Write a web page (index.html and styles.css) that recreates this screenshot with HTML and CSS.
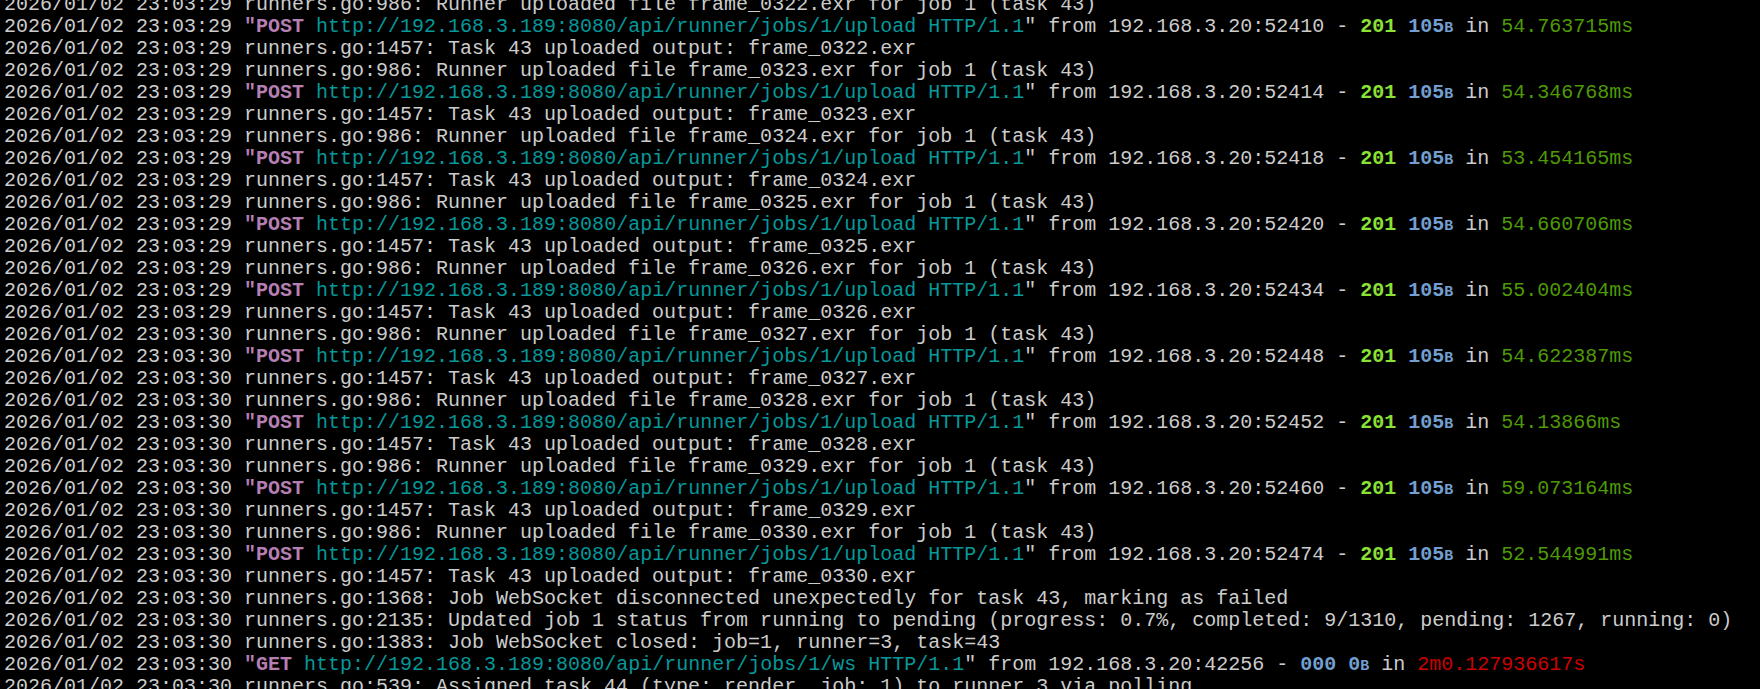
FILE: index.html
```html
<!DOCTYPE html>
<html lang="en">
<head>
  <meta charset="UTF-8" />
  <title>Manager log</title>
  <link rel="stylesheet" href="styles.css">
</head>
<body>
  <div class="term">
    <div class="ln">2026/01/02 23:03:29 runners.go:986: Runner uploaded file frame_0322.exr for job 1 (task 43)</div>
    <div class="ln">2026/01/02 23:03:29 <span class="method">"POST</span> <span class="url">http://192.168.3.189:8080/api/runner/jobs/1/upload HTTP/1.1</span>" from 192.168.3.20:52410 - <span class="ok">201</span> <span class="size">105<small>B</small></span> in <span class="dur">54.763715ms</span></div>
    <div class="ln">2026/01/02 23:03:29 runners.go:1457: Task 43 uploaded output: frame_0322.exr</div>
    <div class="ln">2026/01/02 23:03:29 runners.go:986: Runner uploaded file frame_0323.exr for job 1 (task 43)</div>
    <div class="ln">2026/01/02 23:03:29 <span class="method">"POST</span> <span class="url">http://192.168.3.189:8080/api/runner/jobs/1/upload HTTP/1.1</span>" from 192.168.3.20:52414 - <span class="ok">201</span> <span class="size">105<small>B</small></span> in <span class="dur">54.346768ms</span></div>
    <div class="ln">2026/01/02 23:03:29 runners.go:1457: Task 43 uploaded output: frame_0323.exr</div>
    <div class="ln">2026/01/02 23:03:29 runners.go:986: Runner uploaded file frame_0324.exr for job 1 (task 43)</div>
    <div class="ln">2026/01/02 23:03:29 <span class="method">"POST</span> <span class="url">http://192.168.3.189:8080/api/runner/jobs/1/upload HTTP/1.1</span>" from 192.168.3.20:52418 - <span class="ok">201</span> <span class="size">105<small>B</small></span> in <span class="dur">53.454165ms</span></div>
    <div class="ln">2026/01/02 23:03:29 runners.go:1457: Task 43 uploaded output: frame_0324.exr</div>
    <div class="ln">2026/01/02 23:03:29 runners.go:986: Runner uploaded file frame_0325.exr for job 1 (task 43)</div>
    <div class="ln">2026/01/02 23:03:29 <span class="method">"POST</span> <span class="url">http://192.168.3.189:8080/api/runner/jobs/1/upload HTTP/1.1</span>" from 192.168.3.20:52420 - <span class="ok">201</span> <span class="size">105<small>B</small></span> in <span class="dur">54.660706ms</span></div>
    <div class="ln">2026/01/02 23:03:29 runners.go:1457: Task 43 uploaded output: frame_0325.exr</div>
    <div class="ln">2026/01/02 23:03:29 runners.go:986: Runner uploaded file frame_0326.exr for job 1 (task 43)</div>
    <div class="ln">2026/01/02 23:03:29 <span class="method">"POST</span> <span class="url">http://192.168.3.189:8080/api/runner/jobs/1/upload HTTP/1.1</span>" from 192.168.3.20:52434 - <span class="ok">201</span> <span class="size">105<small>B</small></span> in <span class="dur">55.002404ms</span></div>
    <div class="ln">2026/01/02 23:03:29 runners.go:1457: Task 43 uploaded output: frame_0326.exr</div>
    <div class="ln">2026/01/02 23:03:30 runners.go:986: Runner uploaded file frame_0327.exr for job 1 (task 43)</div>
    <div class="ln">2026/01/02 23:03:30 <span class="method">"POST</span> <span class="url">http://192.168.3.189:8080/api/runner/jobs/1/upload HTTP/1.1</span>" from 192.168.3.20:52448 - <span class="ok">201</span> <span class="size">105<small>B</small></span> in <span class="dur">54.622387ms</span></div>
    <div class="ln">2026/01/02 23:03:30 runners.go:1457: Task 43 uploaded output: frame_0327.exr</div>
    <div class="ln">2026/01/02 23:03:30 runners.go:986: Runner uploaded file frame_0328.exr for job 1 (task 43)</div>
    <div class="ln">2026/01/02 23:03:30 <span class="method">"POST</span> <span class="url">http://192.168.3.189:8080/api/runner/jobs/1/upload HTTP/1.1</span>" from 192.168.3.20:52452 - <span class="ok">201</span> <span class="size">105<small>B</small></span> in <span class="dur">54.13866ms</span></div>
    <div class="ln">2026/01/02 23:03:30 runners.go:1457: Task 43 uploaded output: frame_0328.exr</div>
    <div class="ln">2026/01/02 23:03:30 runners.go:986: Runner uploaded file frame_0329.exr for job 1 (task 43)</div>
    <div class="ln">2026/01/02 23:03:30 <span class="method">"POST</span> <span class="url">http://192.168.3.189:8080/api/runner/jobs/1/upload HTTP/1.1</span>" from 192.168.3.20:52460 - <span class="ok">201</span> <span class="size">105<small>B</small></span> in <span class="dur">59.073164ms</span></div>
    <div class="ln">2026/01/02 23:03:30 runners.go:1457: Task 43 uploaded output: frame_0329.exr</div>
    <div class="ln">2026/01/02 23:03:30 runners.go:986: Runner uploaded file frame_0330.exr for job 1 (task 43)</div>
    <div class="ln">2026/01/02 23:03:30 <span class="method">"POST</span> <span class="url">http://192.168.3.189:8080/api/runner/jobs/1/upload HTTP/1.1</span>" from 192.168.3.20:52474 - <span class="ok">201</span> <span class="size">105<small>B</small></span> in <span class="dur">52.544991ms</span></div>
    <div class="ln">2026/01/02 23:03:30 runners.go:1457: Task 43 uploaded output: frame_0330.exr</div>
    <div class="ln">2026/01/02 23:03:30 runners.go:1368: Job WebSocket disconnected unexpectedly for task 43, marking as failed</div>
    <div class="ln">2026/01/02 23:03:30 runners.go:2135: Updated job 1 status from running to pending (progress: 0.7%, completed: 9/1310, pending: 1267, running: 0)</div>
    <div class="ln">2026/01/02 23:03:30 runners.go:1383: Job WebSocket closed: job=1, runner=3, task=43</div>
    <div class="ln">2026/01/02 23:03:30 <span class="method">"GET</span> <span class="url">http://192.168.3.189:8080/api/runner/jobs/1/ws HTTP/1.1</span>" from 192.168.3.20:42256 - <span class="size">000</span> <span class="size">0<small>B</small></span> in <span class="err">2m0.127936617s</span></div>
    <div class="ln">2026/01/02 23:03:30 runners.go:539: Assigned task 44 (type: render, job: 1) to runner 3 via polling</div>
  </div>
</body>
</html>
```

FILE: styles.css
```css
html, body {
  margin: 0;
  height: 100%;
  background: #000;
  overflow: hidden;
}

.term {
  margin-top: -6px;
  padding-left: 4px;
  font-family: "Liberation Mono", "DejaVu Sans Mono", monospace;
  font-size: 20px;
  line-height: 22px;
  color: #cccccc;
}

.ln {
  height: 22px;
  white-space: pre;
}

.method {
  color: #b57fb3;
  font-weight: bold;
}

.url {
  color: #06989a;
}

.ok {
  color: #8ae234;
  font-weight: bold;
}

.size {
  color: #729fcf;
  font-weight: bold;
}

.size small {
  font-size: 15px;
  line-height: 0;
}

.dur {
  color: #4e9a06;
}

.err {
  color: #cc0000;
}
```
